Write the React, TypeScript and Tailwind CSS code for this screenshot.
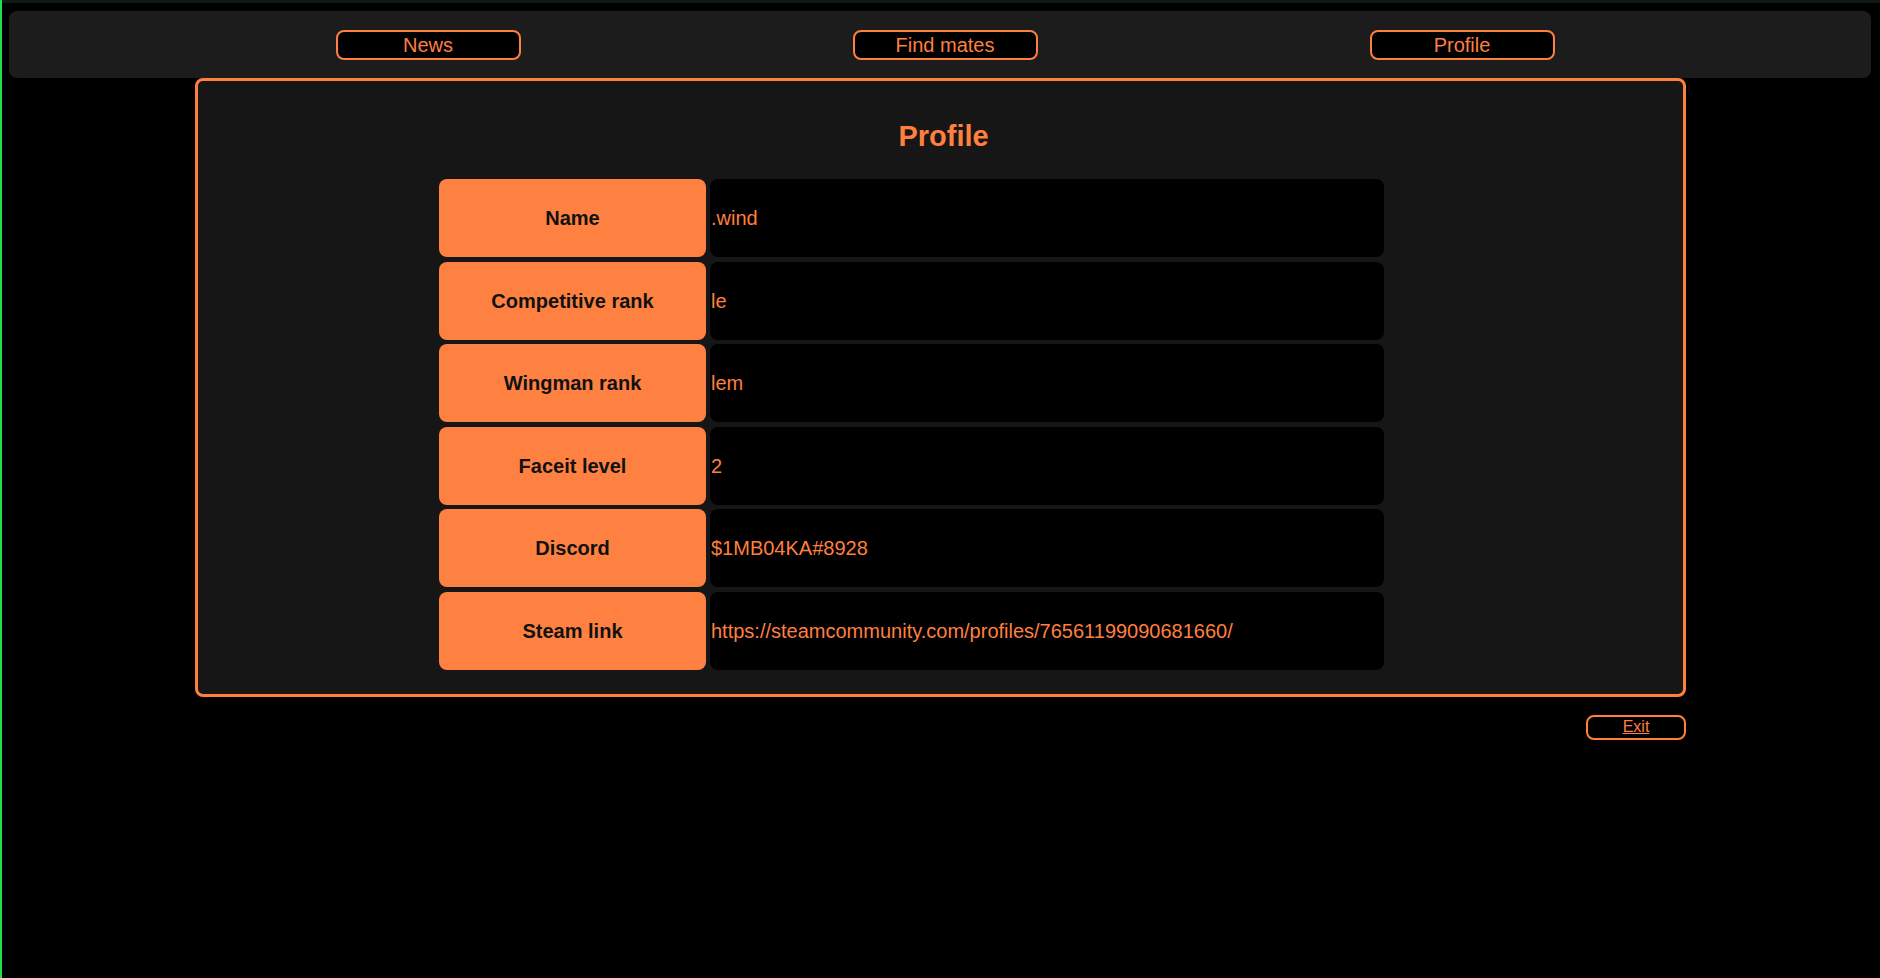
const rows = [
  { label: "Name", value: ".wind" },
  { label: "Competitive rank", value: "le" },
  { label: "Wingman rank", value: "lem" },
  { label: "Faceit level", value: "2" },
  { label: "Discord", value: "$1MB04KA#8928" },
  { label: "Steam link", value: "https://steamcommunity.com/profiles/76561199090681660/" },
];

const links = ["News", "Find mates", "Profile"];

export default function App() {
  return (
    <div className="min-h-screen w-full bg-black border-l-2 border-[#1fe04a] font-['Liberation_Sans',Arial,sans-serif]">
      <div className="h-[3px] bg-[#0f1a12]" />
      <div className="pt-[8px] pl-[7px] pr-[9px]">
        <nav className="h-[67px] rounded-lg bg-[#1c1c1c] flex items-center justify-center gap-[332px] pl-[10px]">
          {links.map((l) => (
            <button
              key={l}
              className="w-[185px] h-[30px] rounded-lg border-2 border-[#ff7f3f] bg-black text-[20px] leading-none text-[#ff7f3f]"
            >
              {l}
            </button>
          ))}
        </nav>
      </div>

      <div className="w-[1491px] ml-[193px]">
        <div className="border-[3px] border-[#ff7f3f] rounded-lg bg-[#161616] pt-[39px] pb-[24px]">
          <h1 className="text-center text-[29px] font-bold text-[#ff7f3f] leading-[33px] ml-[6px]">Profile</h1>
          <div className="mt-[26px] ml-[241px] grid grid-cols-[267px_674px] gap-x-[4px] gap-y-[4.5px]">
            {rows.map((r) => (
              <div key={r.label} className="contents">
                <div className="h-[78px] rounded-lg bg-[#ff8142] flex items-center justify-center text-[20px] font-bold text-[#111]">
                  {r.label}
                </div>
                <div className="h-[78px] rounded-lg bg-black flex items-center pl-[1px] text-[20px] text-[#ff7f3f]">
                  {r.value}
                </div>
              </div>
            ))}
          </div>
        </div>
        <div className="flex justify-end mt-[18px]">
          <button className="w-[100px] h-[25px] rounded-lg border-2 border-[#ff7f3f] bg-black text-[16px] leading-none text-[#ff7f3f] underline">
            Exit
          </button>
        </div>
      </div>
    </div>
  );
}
